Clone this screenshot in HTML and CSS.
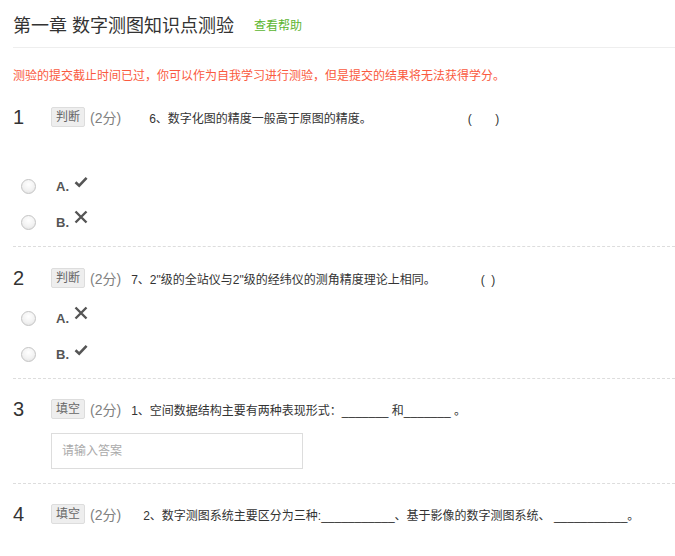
FILE: index.html
```html
<!DOCTYPE html>
<html lang="zh-CN">

<head>
    <meta charset="UTF-8">
    <title>第一章 数字测图知识点测验</title>
    <link rel="stylesheet" href="styles.css">
</head>

<body>
    <div class="page">
        <div class="head">
            <h1 class="title">第一章 数字测图知识点测验</h1>
            <a class="help" href="#">查看帮助</a>
        </div>

        <p class="notice">测验的提交截止时间已过，你可以作为自我学习进行测验，但是提交的结果将无法获得学分。</p>

        <div class="question">
            <div class="q-row">
                <span class="q-num">1</span>
                <span class="q-tag">判断</span>
                <span class="q-score">(2分)</span>
                <span class="q-text q-text-far">6、数字化图的精度一般高于原图的精度。<span class="paren paren-far">(&nbsp;&nbsp;&nbsp;&nbsp;&nbsp;&nbsp;&nbsp;)</span></span>
            </div>
            <div class="q-empty"></div>
            <ul class="options">
                <li class="option">
                    <span class="radio"></span>
                    <span class="opt-letter">A.</span>
                    <svg class="icon" width="14" height="12" viewBox="0 0 14 12"><path d="M1.5 6.2 L5.2 9.6 L12.6 1.8" fill="none" stroke="#555" stroke-width="2.6"/></svg>
                </li>
                <li class="option">
                    <span class="radio"></span>
                    <span class="opt-letter">B.</span>
                    <svg class="icon icon-x" width="14" height="14" viewBox="0 0 14 14"><path d="M1.5 1.5 L12.5 12.5 M12.5 1.5 L1.5 12.5" fill="none" stroke="#555" stroke-width="2.4"/></svg>
                </li>
            </ul>
        </div>

        <div class="question">
            <div class="q-row">
                <span class="q-num">2</span>
                <span class="q-tag">判断</span>
                <span class="q-score">(2分)</span>
                <span class="q-text">7、2"级的全站仪与2"级的经纬仪的测角精度理论上相同。<span class="paren">(&nbsp;&nbsp;)</span></span>
            </div>
            <ul class="options">
                <li class="option">
                    <span class="radio"></span>
                    <span class="opt-letter">A.</span>
                    <svg class="icon icon-x" width="14" height="14" viewBox="0 0 14 14"><path d="M1.5 1.5 L12.5 12.5 M12.5 1.5 L1.5 12.5" fill="none" stroke="#555" stroke-width="2.4"/></svg>
                </li>
                <li class="option">
                    <span class="radio"></span>
                    <span class="opt-letter">B.</span>
                    <svg class="icon" width="14" height="12" viewBox="0 0 14 12"><path d="M1.5 6.2 L5.2 9.6 L12.6 1.8" fill="none" stroke="#555" stroke-width="2.6"/></svg>
                </li>
            </ul>
        </div>

        <div class="question question-fill">
            <div class="q-row">
                <span class="q-num">3</span>
                <span class="q-tag">填空</span>
                <span class="q-score">(2分)</span>
                <span class="q-text">1、空间数据结构主要有两种表现形式：_______ 和_______ 。</span>
            </div>
            <input class="answer" type="text" placeholder="请输入答案">
        </div>

        <div class="question question-last">
            <div class="q-row">
                <span class="q-num">4</span>
                <span class="q-tag">填空</span>
                <span class="q-score">(2分)</span>
                <span class="q-text q-text-mid">2、数字测图系统主要区分为三种:___________、基于影像的数字测图系统、 ___________。</span>
            </div>
        </div>
    </div>
</body>

</html>
```

FILE: styles.css
```css
body {
    margin: 0;
    background: #fff;
    font-family: "Liberation Sans", "Noto Sans CJK SC", sans-serif;
    color: #333;
}

.page {
    padding-left: 13px;
}

.head {
    display: flex;
    align-items: center;
    height: 47px;
    border-bottom: 1px solid #eee;
}

.title {
    margin: 0;
    font-size: 18px;
    font-weight: normal;
    color: #333;
}

.help {
    margin-left: 20px;
    margin-top: 1px;
    font-size: 12px;
    color: #5cb531;
    text-decoration: none;
}

.notice {
    margin: 18px 0 0;
    line-height: 20px;
    font-size: 12px;
    color: #fa5a40;
}

.question {
    padding: 17px 0 7px;
    border-bottom: 1px dashed #ddd;
}

.q-row {
    display: flex;
    align-items: center;
    height: 28px;
}

.q-num {
    width: 38px;
    font-size: 20px;
    color: #333;
}

.q-tag {
    padding: 0 4px;
    height: 18px;
    line-height: 18px;
    font-size: 12px;
    color: #666;
    background: #eee;
    border: 1px solid #ddd;
    border-radius: 2px;
}

.q-score {
    margin-left: 5px;
    font-size: 14px;
    color: #808080;
}

.q-text {
    margin-left: 10px;
    font-size: 12px;
    color: #333;
}

.q-text-far {
    margin-left: 28px;
}

.q-text-mid {
    margin-left: 22px;
}

.paren {
    margin-left: 45px;
}

.paren-far {
    margin-left: 96px;
}

.q-empty {
    height: 29px;
}

.options {
    list-style: none;
    margin: 7px 0 0;
    padding: 0;
}

.option {
    display: flex;
    align-items: center;
    height: 36px;
}

.radio {
    width: 13px;
    height: 13px;
    margin-left: 8px;
    margin-top: 2px;
    border: 1px solid #c4c4c4;
    border-radius: 50%;
    background: radial-gradient(circle at 50% 35%, #fff 0%, #f2f2f2 55%, #ddd 100%);
}

.opt-letter {
    margin-left: 20px;
    margin-top: 2px;
    font-size: 13px;
    font-weight: bold;
    color: #555;
}

.icon {
    margin-left: 5px;
    margin-top: -6px;
}

.icon-x {
    margin-top: -8px;
}

.question-fill {
    padding-bottom: 14px;
    padding-top: 16px;
}

.answer {
    display: block;
    box-sizing: border-box;
    width: 252px;
    height: 36px;
    margin: 10px 0 0 38px;
    padding: 0 10px;
    border: 1px solid #ddd;
    font-family: "Liberation Sans", "Noto Sans CJK SC", sans-serif;
    font-size: 12px;
    color: #333;
    outline: none;
}

.answer::placeholder {
    color: #aaa;
}

.question-last {
    padding-top: 16px;
    border-bottom: none;
}
```
